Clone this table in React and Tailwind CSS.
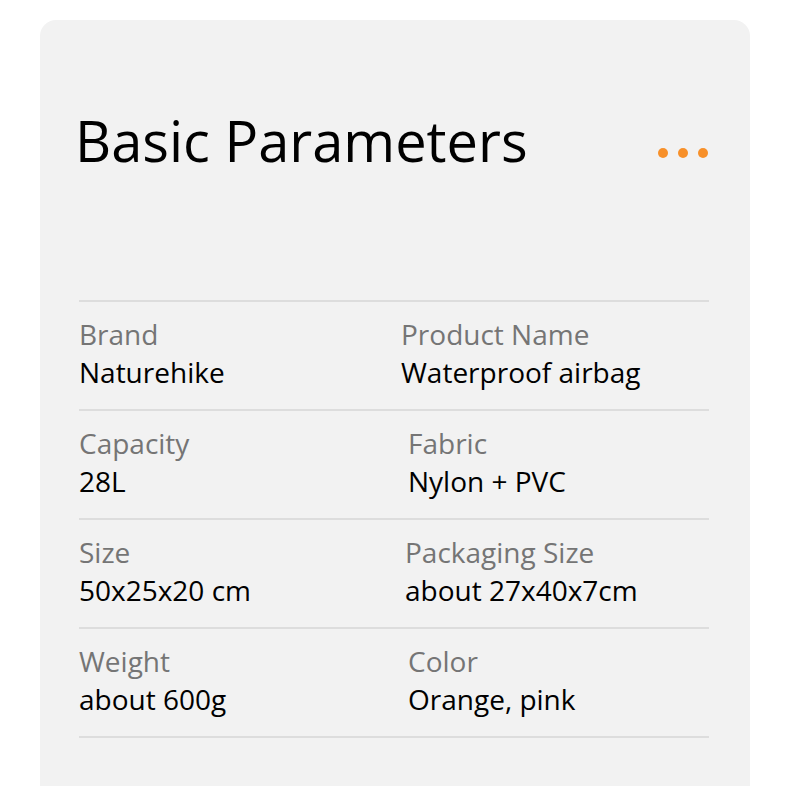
import React from 'react'

const rows = [
  [
    { label: 'Brand', value: 'Naturehike' },
    { label: 'Product Name', value: 'Waterproof airbag', shift: 'ml-0' },
  ],
  [
    { label: 'Capacity', value: '28L' },
    { label: 'Fabric', value: 'Nylon + PVC', shift: 'ml-[7px]' },
  ],
  [
    { label: 'Size', value: '50x25x20 cm' },
    { label: 'Packaging Size', value: 'about 27x40x7cm', shift: 'ml-[4px]' },
  ],
  [
    { label: 'Weight', value: 'about 600g' },
    { label: 'Color', value: 'Orange, pink', shift: 'ml-[7px]' },
  ],
]

function Cell({ label, value, shift = '' }) {
  return (
    <div className={`flex flex-col ${shift}`}>
      <span className="text-[28px] leading-[38px] text-[#757575]">{label}</span>
      <span className="text-[28px] leading-[38px] text-black">{value}</span>
    </div>
  )
}

export default function App() {
  return (
    <div className="w-[790px] h-[786px] bg-white pl-[40px] pt-[20px] overflow-hidden">
      <div
        className="w-[710px] h-[766px] bg-[#f2f2f2] rounded-t-[16px] pl-[39px] pr-[41px]"
        style={{ fontFamily: '"Open Sans", "Noto Sans", sans-serif' }}
      >
        {/* Header */}
        <div className="flex items-center justify-between h-[280px] pb-[40px]">
          <h1 className="text-[56px] leading-none text-black -ml-[4px]">Basic Parameters</h1>
          <div className="flex gap-[10px] mr-[1px] mt-[26px]">
            <span className="w-[10px] h-[10px] rounded-full bg-[#f7902a]" />
            <span className="w-[10px] h-[10px] rounded-full bg-[#f7902a]" />
            <span className="w-[10px] h-[10px] rounded-full bg-[#f7902a]" />
          </div>
        </div>

        {/* Parameter table */}
        <div className="border-t-2 border-[#dddddd]">
          {rows.map((row, i) => (
            <div
              key={i}
              className="grid grid-cols-[322px_1fr] h-[109px] pt-[13px] border-b-2 border-[#dddddd]"
            >
              {row.map((cell) => (
                <Cell key={cell.label} {...cell} />
              ))}
            </div>
          ))}
        </div>
      </div>
    </div>
  )
}
